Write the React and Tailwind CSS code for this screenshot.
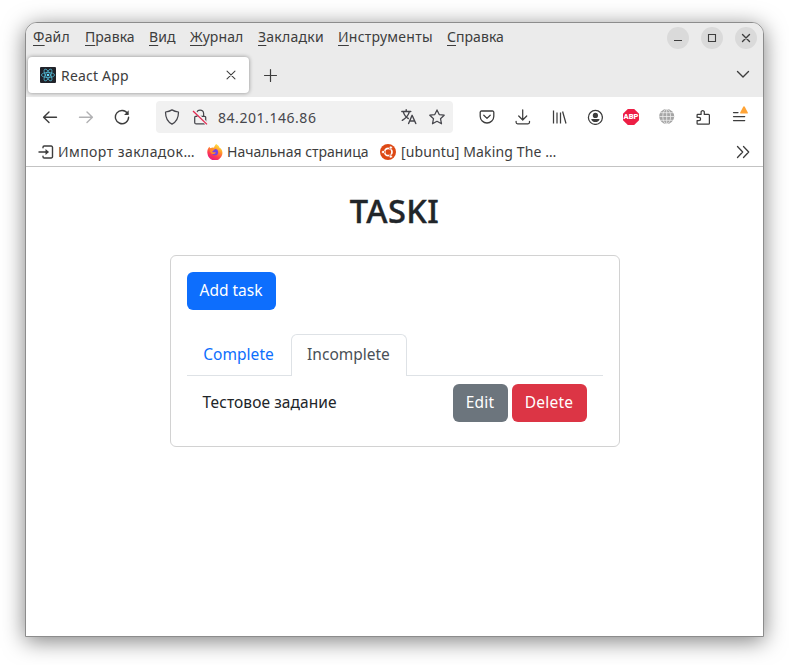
import React from "react";

const Icon = ({ children, size = 16, className = "" }) => (
  <svg width={size} height={size} viewBox="0 0 16 16" fill="none" stroke="currentColor" strokeWidth="1.25" strokeLinecap="round" strokeLinejoin="round" className={"shrink-0 " + className}>
    {children}
  </svg>
);

const Cell = ({ children }) => <div className="flex h-8 w-9 items-center justify-center">{children}</div>;

const menu = [
  ["Файл", "w-[52px] tracking-[0.2px]"],
  ["Правка", "w-[64px] tracking-[0.05px]"],
  ["Вид", "w-[41px] tracking-[0.1px]"],
  ["Журнал", "w-[68px] tracking-[0.1px]"],
  ["Закладки", "w-[80px] tracking-[0.25px]"],
  ["Инструменты", "w-[109px] tracking-[0.25px]"],
  ["Справка", "w-[70px] tracking-[0.05px]"],
];

function TitleBar() {
  return (
    <div className="flex h-[31px] justify-between pl-[7px] pr-[6px]">
      <div className="flex pt-1 text-[14px] leading-[20px]">
        {menu.map(([label, w]) => (
          <div key={label} className={"whitespace-nowrap " + w}>
            <span className="underline decoration-1 underline-offset-[3px] [text-decoration-skip-ink:none]">{label[0]}</span>
            {label.slice(1)}
          </div>
        ))}
      </div>
      <div className="flex gap-3 pt-1">
        <div className="flex size-[22px] items-center justify-center rounded-full bg-[#dadada]">
          <Icon className="[stroke-linecap:butt]"><path d="M4 10.500h8" strokeWidth="1" /></Icon>
        </div>
        <div className="flex size-[22px] items-center justify-center rounded-full bg-[#dadada]">
          <Icon><path d="M4.500 4.500h7v7h-7z" strokeWidth="1.100" strokeLinejoin="miter" /></Icon>
        </div>
        <div className="flex size-[22px] items-center justify-center rounded-full bg-[#dadada]">
          <Icon><path d="M4.500 4.500l7 7m0-7l-7 7" strokeWidth="1.400" /></Icon>
        </div>
      </div>
    </div>
  );
}

function ReactLogo() {
  return (
    <svg width="16" height="16" viewBox="0 0 16 16" className="shrink-0">
      <rect width="16" height="16" rx="1" fill="#20232a" />
      <g fill="none" stroke="#53bdd8" strokeWidth=".75">
        <ellipse cx="8" cy="8" rx="6.600" ry="2.500" />
        <ellipse cx="8" cy="8" rx="6.600" ry="2.500" transform="rotate(60 8 8)" />
        <ellipse cx="8" cy="8" rx="6.600" ry="2.500" transform="rotate(120 8 8)" />
      </g>
      <circle cx="8" cy="8" r="1.300" fill="#61dafb" />
    </svg>
  );
}

function TabStrip() {
  return (
    <div className="flex h-[43px] items-start pl-[2px] pr-[12px] pt-[3px]">
      <div className="flex h-9 w-[221px] items-center rounded bg-white pl-3 pr-3 shadow-[0_0_4px_rgba(0,0,0,0.4)]">
        <ReactLogo />
        <span className="ml-[5px] pt-[2px] text-[14px] leading-[20px] tracking-[0.2px]">React App</span>
        <Icon size={12} className="ml-auto"><path d="M2.700 2.700l10.600 10.600m0-10.600L2.700 13.300" strokeWidth="1.400" /></Icon>
      </div>
      <Icon className="ml-[13px] mt-[10px]"><path d="M8.500 2.500v12M2.500 8.500h12" strokeWidth="1.200" /></Icon>
      <Icon className="ml-auto mt-[9px]"><path d="M2.500 5.500L8 11l5.500-5.500" strokeWidth="1.400" /></Icon>
    </div>
  );
}

function NavBar() {
  return (
    <div className="flex h-10 items-center pl-[6px]">
      <Cell><Icon><path d="M14.500 8.200H1.700M7 2.900L1.600 8.200 7 13.500" strokeWidth="1.400" /></Icon></Cell>
      <Cell><Icon className="text-[#b1b1b3]"><path d="M1.500 8.200h12.800M9 2.900l5.400 5.300L9 13.500" strokeWidth="1.400" /></Icon></Cell>
      <Cell>
        <Icon>
          <path d="M13.600 4.600A6.600 6.600 0 1 0 14.600 8.300" strokeWidth="1.400" />
          <path d="M14.700 1.300v4.600h-4.600z" fill="currentColor" stroke="none" />
        </Icon>
      </Cell>
      <div className="ml-4 flex h-8 w-[297px] items-center rounded bg-[#f1f1f1] pl-2 pr-2 text-[#46464c]">
        <Icon><path d="M8 .9C6.200 2 4 2.700 1.500 3c0 5.300 1.700 9.700 6.500 12.100C12.800 12.700 14.500 8.300 14.500 3 12 2.700 9.800 2 8 .9z" /></Icon>
        <svg width="16" height="16" viewBox="0 0 16 16" fill="none" stroke="currentColor" strokeWidth="1.250" className="ml-3 shrink-0">
          <path d="M4.600 7V4.500a3.500 3.500 0 0 1 7 0V7M3.600 7.400h9.100a1 1 0 0 1 1 1v5a1.500 1.500 0 0 1-1.500 1.500h-8a1.500 1.500 0 0 1-1.500-1.500v-5a1 1 0 0 1 .9-1z" />
          <path d="M1.300 1.300l13.600 13.600" stroke="#f1f1f1" strokeWidth="3" />
          <path d="M1 2l14 13.400" stroke="#e22850" strokeWidth="1.300" />
        </svg>
        <span className="ml-[10px] pt-[2px] text-[14px] leading-[20px] tracking-[0.55px]">84.201.146.86</span>
        <Icon className="ml-auto">
          <path d="M.8 2.500h9M5.200.8v1.700M2.300 2.900c1 3.400 3 5.600 5 6.600M8.300 2.900C7.600 6 5 9 1.300 11.300M7.600 14.500l3.500-8.200 3.700 8.200M8.700 12h4.900" strokeWidth="1.400" />
        </Icon>
        <Icon className="ml-3"><path d="M8 .9l2.200 4.700 5 .6-3.700 3.500 1 5.100L8 12.300l-4.500 2.500 1-5.100L.8 6.200l5-.6z" /></Icon>
      </div>
      <div className="ml-4 flex">
        <Cell><Icon><path d="M2.500 2h11a1.300 1.300 0 0 1 1.300 1.300v3.900a6.800 6.800 0 0 1-13.600 0V3.300A1.300 1.300 0 0 1 2.500 2zM4.800 6.300L8 9.400l3.200-3.100" strokeWidth="1.300" /></Icon></Cell>
        <Cell><Icon><path d="M7.700.8v10M3.700 7l4 4 4-4M1.100 12.300v1a1.500 1.500 0 0 0 1.500 1.500h10.400a1.500 1.500 0 0 0 1.500-1.500v-1" /></Icon></Cell>
        <Cell><Icon><path d="M2.500 1.500v13M6 3.500v11M9.500 3.500v11M11.600 2.500l3.400 12" strokeLinecap="butt" /></Icon></Cell>
        <Cell>
          <Icon>
            <circle cx="8.400" cy="8.400" r="7" />
            <circle cx="8.400" cy="6.400" r="2.600" fill="currentColor" stroke="none" />
            <path d="M4.200 9.900h8.400c-.2 2-2.200 3.200-4.200 3.200s-4-1.200-4.200-3.200z" fill="currentColor" stroke="none" />
          </Icon>
        </Cell>
        <Cell>
          <div className="flex size-4 items-center justify-center bg-[#ed1e45] font-['Roboto',sans-serif] text-[7.500px] font-black leading-none text-white [clip-path:polygon(30%_0,70%_0,100%_30%,100%_70%,70%_100%,30%_100%,0_70%,0_30%)]">
            ABP
          </div>
        </Cell>
        <Cell>
          <svg width="16" height="16" viewBox="0 0 16 16" className="shrink-0">
            <circle cx="7.700" cy="7.500" r="7.500" fill="#a5a5a5" />
            <g fill="none" stroke="#eeeeee" strokeWidth=".8">
              <path d="M7.700 0v15M.3 7.500h15M1.500 3.700h12.400M1.500 11.300h12.400" />
              <ellipse cx="7.700" cy="7.500" rx="3.900" ry="7.300" />
            </g>
          </svg>
        </Cell>
        <Cell>
          <Icon><path d="M2.800 5.400h3.300V2.800a1.700 1.700 0 0 1 3.200 0v2.600h4.200a.9.900 0 0 1 .9.900v8a.9.900 0 0 1-.9.900H2.800a.7.700 0 0 1-.7-.7v-3h1.900a1.600 1.600 0 0 0 0-3.200H2.100V6.100a.7.700 0 0 1 .7-.7z" /></Icon>
        </Cell>
        <div className="relative">
          <Cell><Icon><path d="M2.500 3.500h4.500M2.500 7.500h11.200M2.500 11.500h11.200" /></Icon></Cell>
          <svg width="8" height="8" viewBox="0 0 8 8" className="absolute left-[19px] top-[5px]">
            <path d="M4 .3a.9.900 0 0 1 .8.500l3 5.600a.8.800 0 0 1-.7 1.200H.9a.8.800 0 0 1-.7-1.200l3-5.600A.9.900 0 0 1 4 .3z" fill="#ffa436" />
          </svg>
        </div>
      </div>
    </div>
  );
}

function Firefox() {
  return (
    <svg width="16" height="16" viewBox="0 0 16 16" className="shrink-0">
      <defs>
        <linearGradient id="ff" x1=".8" y1="0" x2=".3" y2="1">
          <stop offset="0" stopColor="#fff44f" />
          <stop offset=".35" stopColor="#ffa02a" />
          <stop offset=".7" stopColor="#ff3a50" />
          <stop offset="1" stopColor="#e31587" />
        </linearGradient>
      </defs>
      <path d="M9.200 0c2 1.200 3 2.400 3.300 3.700.7.200 1.400.8 1.700 1.300 1.200 1.600 1.600 3.700.9 6a7.500 7.500 0 0 1-14.700-1.700C0 6.500.9 4.300 2.500 2.700c.2.700.5 1.200.9 1.500C4.600 3.400 6 3.400 7 3.700 7.300 2.200 8.200 1.200 9.200 0z" fill="url(#ff)" />
      <circle cx="8" cy="8.200" r="3.100" fill="#7542e5" />
      <path d="M3.300 4.400c1.700-.6 3 .1 4.700 1.200-.8.900-2.500.8-2.700 2.400.8.900 2.300-.2 3.600.4-.8 1.500-2.900 2.200-4.500 1.100C3 8.500 2.700 6 3.300 4.400z" fill="#ff8a2a" />
    </svg>
  );
}

function Ubuntu() {
  return (
    <svg width="16" height="16" viewBox="0 0 16 16" className="shrink-0">
      <circle cx="8" cy="8" r="8" fill="#dd4814" />
      <circle cx="8.300" cy="8" r="3.700" fill="none" stroke="#fff" strokeWidth="1.700" />
      <g fill="#fff" stroke="#dd4814" strokeWidth=".7">
        <circle cx="3.100" cy="8" r="1.600" />
        <circle cx="10.800" cy="3.500" r="1.600" />
        <circle cx="10.800" cy="12.500" r="1.600" />
      </g>
    </svg>
  );
}

function Bookmarks() {
  return (
    <div className="flex h-[30px] items-center border-b border-[#c3c3c3] pl-3 pr-[12px] text-[14px] leading-[20px]">
      <Icon><path d="M1 8h8.500M5 3.800V3.200A1.200 1.200 0 0 1 6.200 2h7A1.300 1.300 0 0 1 14.500 3.300v9.400A1.300 1.300 0 0 1 13.200 14h-7A1.200 1.200 0 0 1 5 12.800v-.6" strokeWidth="1.400" /><path d="M7.500 5l3.500 3-3.500 3z" fill="currentColor" stroke="none" /></Icon>
      <span className="ml-1 w-[149px] whitespace-nowrap tracking-[0.43px]">Импорт закладок…</span>
      <Firefox />
      <span className="ml-1 w-[153px] whitespace-nowrap">Начальная страница</span>
      <Ubuntu />
      <span className="ml-[5px] whitespace-nowrap tracking-[0.13px]">[ubuntu] Making The …</span>
      <Icon className="ml-auto"><path d="M2.500 2.500L7.700 8 2.500 13.500M8.500 2.500L13.700 8 8.500 13.500" strokeWidth="1.300" /></Icon>
    </div>
  );
}

function Page() {
  return (
    <div className="text-[15.500px] leading-6 text-[#212529]">
      <h1 className="mt-[24px] text-center text-[32.500px] font-medium leading-[40px] tracking-[0.5px] [-webkit-text-stroke:0.4px_#212529]">TASKI</h1>
      <div className="mx-auto mt-[24px] h-[192px] w-[450px] rounded-md border border-[#d2d2d2] p-4">
        <button className="block h-[38px] w-[89px] whitespace-nowrap rounded-md bg-[#0d6efd] pb-[2px] text-white">Add task</button>
        <div className="mt-6 flex h-[42px] border-b border-[#dee2e6]">
          <div className="w-[104px] whitespace-nowrap pt-2 text-center tracking-[0.05px] text-[#0d6efd]">Complete</div>
          <div className="h-[42px] w-[116px] whitespace-nowrap rounded-t-md border border-b-0 border-[#dee2e6] bg-white pt-[7px] text-center text-[#495057]">Incomplete</div>
        </div>
        <div className="flex items-center px-4 pt-2">
          <span className="whitespace-nowrap pb-[2px] tracking-[0.08px]">Тестовое задание</span>
          <button className="ml-auto h-[38px] w-[55px] rounded-md bg-[#6c757d] pb-[2px] tracking-[0.2px] text-white">Edit</button>
          <button className="ml-1 h-[38px] w-[75px] rounded-md bg-[#dc3545] pb-[2px] tracking-[0.2px] text-white">Delete</button>
        </div>
      </div>
    </div>
  );
}

export default function App() {
  return (
    <div className="h-[665px] w-[789px] overflow-hidden bg-white pl-[25px] pt-[22px] font-['Noto_Sans','Open_Sans',sans-serif]">
      <div className="h-[615px] w-[739px] overflow-hidden rounded-t-xl border border-[#8c8c8c] bg-white text-[#3d3d3d] shadow-[0_4px_22px_rgba(0,0,0,0.5)]">
        <div className="bg-[#ebebeb]">
          <TitleBar />
          <TabStrip />
        </div>
        <NavBar />
        <Bookmarks />
        <Page />
      </div>
    </div>
  );
}
